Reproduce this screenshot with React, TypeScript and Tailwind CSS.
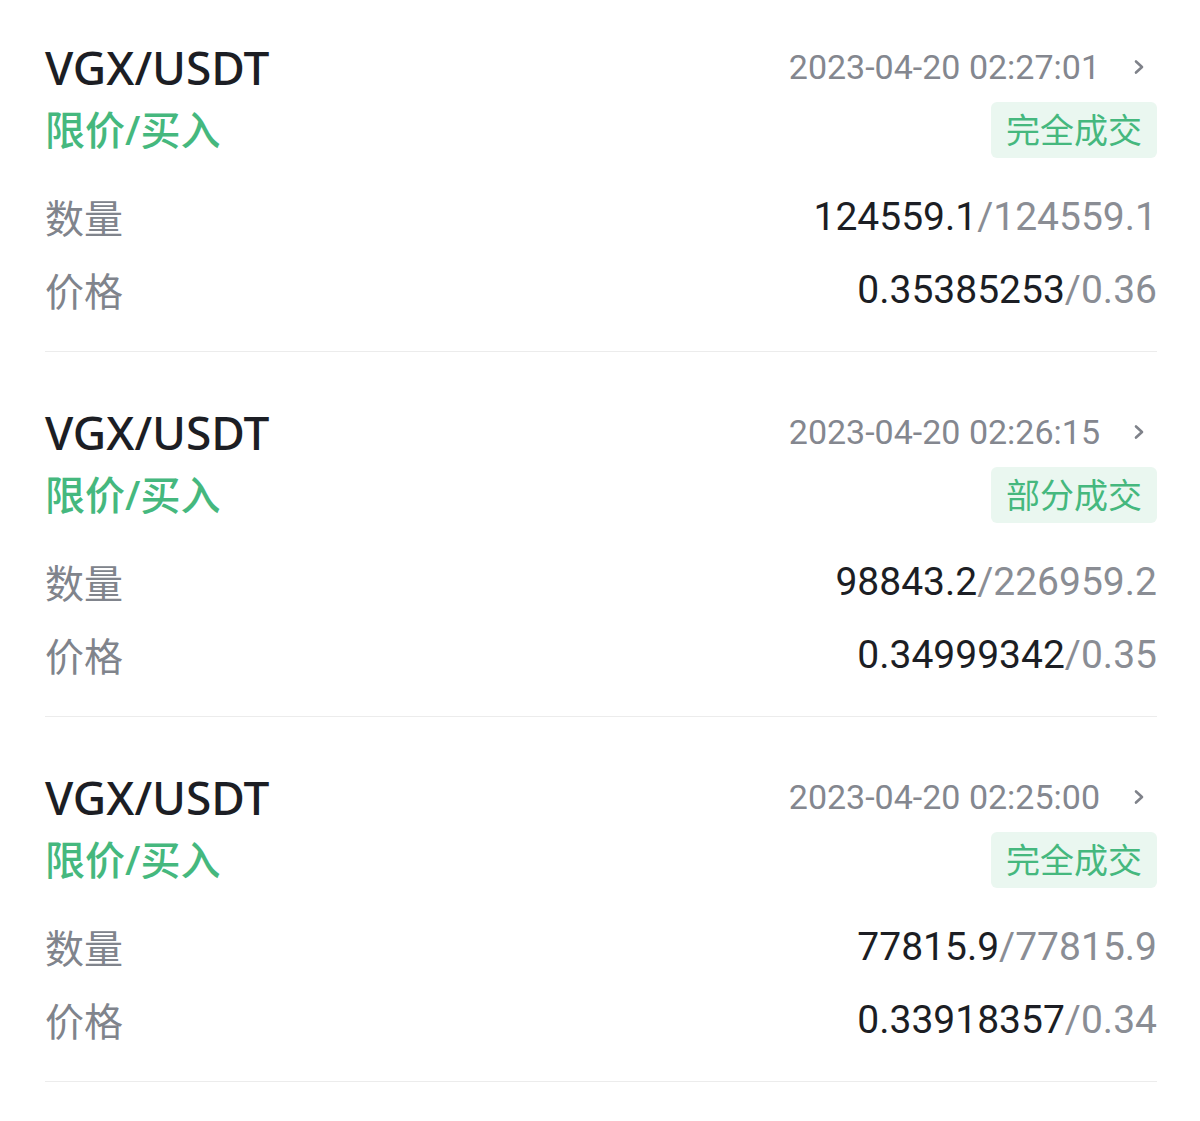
import React from 'react'

type Order = {
  pair: string
  side: string
  time: string
  status: string
  filled: string
  amount: string
  avgPrice: string
  price: string
}

const orders: Order[] = [
  {
    pair: 'VGX/USDT',
    side: '限价/买入',
    time: '2023-04-20 02:27:01',
    status: '完全成交',
    filled: '124559.1',
    amount: '124559.1',
    avgPrice: '0.35385253',
    price: '0.36',
  },
  {
    pair: 'VGX/USDT',
    side: '限价/买入',
    time: '2023-04-20 02:26:15',
    status: '部分成交',
    filled: '98843.2',
    amount: '226959.2',
    avgPrice: '0.34999342',
    price: '0.35',
  },
  {
    pair: 'VGX/USDT',
    side: '限价/买入',
    time: '2023-04-20 02:25:00',
    status: '完全成交',
    filled: '77815.9',
    amount: '77815.9',
    avgPrice: '0.33918357',
    price: '0.34',
  },
]

const cjk = 'font-["Noto_Sans","Noto_Sans_CJK_SC",sans-serif]'
const num = 'font-["Roboto","Noto_Sans",sans-serif]'

function Chevron() {
  return (
    <svg width="12" height="16" viewBox="0 0 12 16" className="ml-[33px] mr-[12px]">
      <polyline points="3,2.5 9,8 3,13.5" fill="none" stroke="#7f828a" strokeWidth="2.6" strokeLinecap="round" strokeLinejoin="round" />
    </svg>
  )
}

function OrderCard({ order, first }: { order: Order; first: boolean }) {
  return (
    <div className={`${first ? 'pt-[39px]' : 'pt-[52px]'} pb-[31px] border-b border-[#ececec]`}>
      {/* Header */}
      <div className="flex h-[56px] items-center justify-between">
        <span className={`${cjk} text-[46px] font-medium text-[#1c1e24] leading-none`}>{order.pair}</span>
        <div className="flex items-center">
          <span className={`${num} text-[34px] text-[#84878f] leading-none`}>{order.time}</span>
          <Chevron />
        </div>
      </div>

      <div className="mt-[7px] flex h-[56px] items-center justify-between">
        <span className={`${cjk} text-[40px] font-medium text-[#45b87e] leading-none`}>{order.side}</span>
        <span className={`${cjk} flex h-[56px] items-center rounded-md bg-[#eaf7f0] px-[15px] text-[34px] text-[#45b87e] leading-none`}>
          {order.status}
        </span>
      </div>

      {/* Details */}
      <div className="mt-[29px] flex h-[60px] items-center justify-between">
        <span className={`${cjk} text-[39px] text-[#80848c] leading-none`}>数量</span>
        <span className={`${num} text-[39px] leading-none`}>
          <span className="text-[#1c1e24]">{order.filled}</span>
          <span className="text-[#8a8d94]">/{order.amount}</span>
        </span>
      </div>
      <div className="mt-[13px] flex h-[60px] items-center justify-between">
        <span className={`${cjk} text-[39px] text-[#80848c] leading-none`}>价格</span>
        <span className={`${num} text-[39px] leading-none`}>
          <span className="text-[#1c1e24]">{order.avgPrice}</span>
          <span className="text-[#8a8d94]">/{order.price}</span>
        </span>
      </div>
    </div>
  )
}

export default function App() {
  return (
    <div className="min-h-[1121px] w-[1200px] bg-white pl-[45px] pr-[43px]">
      {orders.map((order, i) => (
        <OrderCard key={order.time} order={order} first={i === 0} />
      ))}
    </div>
  )
}
